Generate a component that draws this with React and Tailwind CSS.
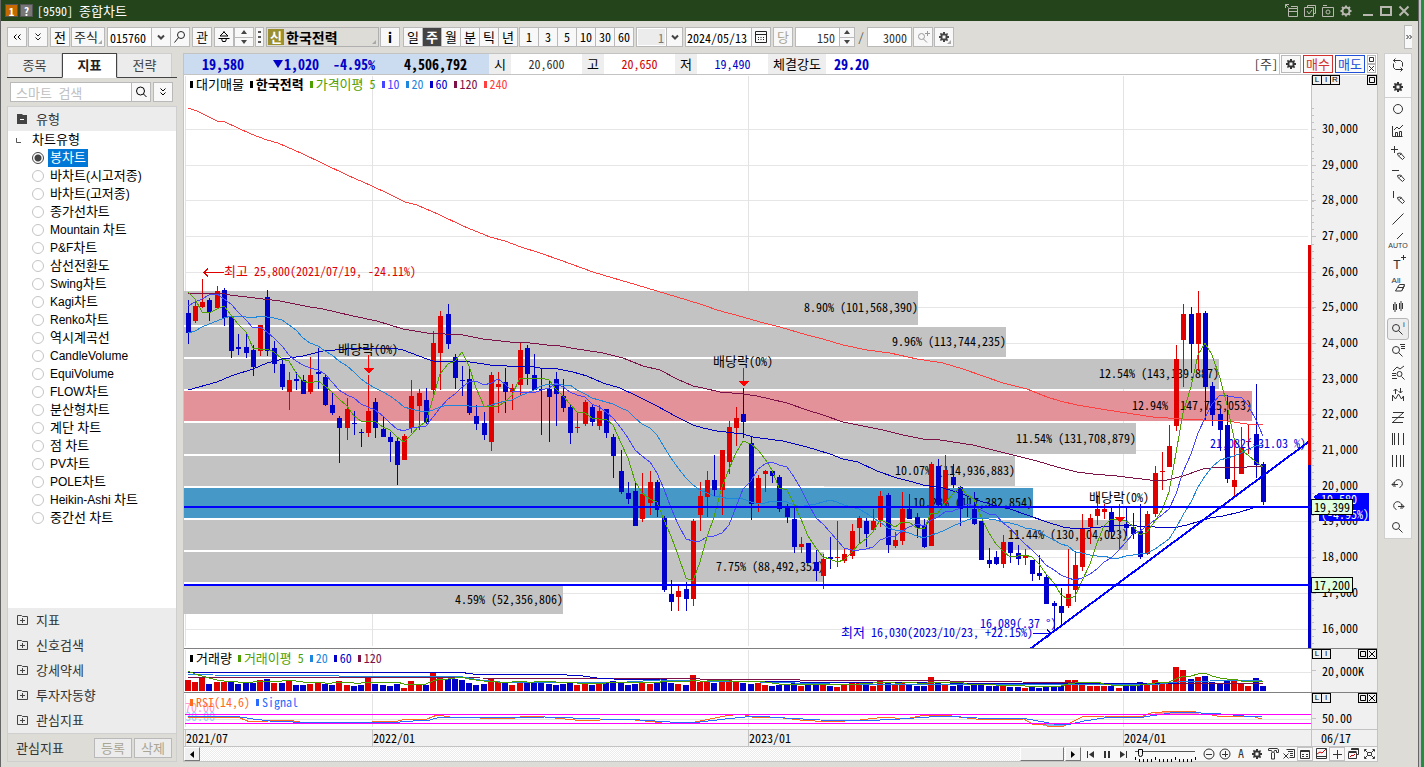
import React from "react";

/* ---------- text ---------- */

// Hangul runs are set one size larger than the half-width Latin around them.
function T({ children, size = "text-[13px]" }) {
  return String(children)
    .split(/([가-힣]+)/)
    .map((part, i) => (i % 2 ? <span key={i} className={size}>{part}</span> : part));
}

function SvgText({ children, ...props }) {
  return (
    <text fontSize="12" {...props}>
      {String(children)
        .split(/([가-힣]+)/)
        .map((part, i) => (i % 2 ? <tspan key={i} fontSize="13">{part}</tspan> : part))}
    </text>
  );
}

/* ---------- price data: [high, low, body top, body bottom, up] ---------- */

const CANDLES = [
  [300,344,313,333,0],[300,323,306,321,1],[279,308,302,307,1],[298,321,300,312,0],[286,309,291,308,1],
  [288,326,290,318,0],[317,358,317,351,0],[334,355,347,349,0],[333,358,347,353,0],[345,376,350,367,0],
  [325,356,325,351,1],[290,356,297,351,0],[341,373,348,364,0],[358,390,364,387,0],[372,410,380,392,1],
  [372,390,379,381,0],[375,394,380,394,0],[357,394,375,392,1],[348,389,372,374,0],[375,406,377,405,0],
  [393,415,405,413,0],[416,463,418,428,0],[398,440,409,428,1],[411,435,423,424,0],[429,447,432,433,0],
  [375,437,411,433,1],[398,438,402,428,0],[416,437,429,437,0],[432,462,437,442,0],[437,485,441,465,0],
  [434,460,436,460,1],[380,433,396,428,1],[389,430,393,406,1],[388,424,400,422,0],[331,394,343,390,1],
  [311,390,316,353,1],[304,349,314,344,0],[354,389,357,378,0],[366,396,380,381,0],[368,415,379,413,0],
  [405,430,416,424,0],[412,440,423,435,0],[372,451,375,442,1],[372,413,384,387,1],[368,413,382,392,0],
  [384,410,388,392,1],[343,395,350,385,1],[345,385,348,374,0],[354,390,375,390,0],[369,435,389,390,0],
  [380,442,389,397,0],[372,426,379,394,0],[379,412,396,408,0],[404,444,407,433,0],[412,433,427,428,1],
  [400,426,402,424,1],[405,426,407,422,0],[405,430,411,426,1],[409,438,409,433,0],[434,478,437,456,0],
  [450,494,471,492,0],[482,504,493,499,0],[482,526,491,526,0],[473,522,494,519,1],[471,515,482,503,1],
  [480,517,482,510,0],[516,592,518,590,0],[580,611,594,602,0],[586,611,591,597,1],[582,611,589,599,0],
  [519,606,521,599,1],[482,531,496,515,1],[471,517,480,497,1],[455,497,480,490,0],[450,515,450,490,1],
  [421,474,427,462,1],[407,446,418,428,1],[388,438,414,422,0],[437,520,443,504,0],[475,512,478,503,1],
  [470,492,471,474,1],[470,483,471,476,0],[475,512,477,509,0],[504,523,507,517,0],[505,553,519,547,0],
  [537,553,544,547,1],[543,563,543,563,0],[550,581,562,571,0],[554,589,559,576,1],[537,569,557,559,0],
  [521,567,557,558,1],[548,563,554,561,1],[524,559,531,556,1],[516,544,518,528,1],[518,547,521,534,0],
  [509,530,521,530,1],[491,527,496,520,1],[493,553,495,545,0],[532,548,540,546,1],[492,545,509,541,1],
  [494,519,509,519,0],[513,538,517,528,0],[519,548,525,547,0],[462,546,464,546,1],[459,508,466,505,0],
  [455,506,470,504,1],[464,488,477,485,0],[486,526,487,509,0],[495,517,506,507,0],[492,525,509,524,0],
  [521,560,521,560,0],[548,568,560,564,0],[551,565,557,564,0],[535,568,542,564,1],[542,563,542,553,0],
  [545,565,553,559,0],[549,565,556,558,1],[560,581,560,574,0],[555,580,573,576,0],[574,604,577,604,0],
  [601,630,603,606,0],[588,626,606,613,0],[549,608,594,606,1],[551,602,565,590,1],[514,571,529,567,1],
  [514,544,518,527,1],[495,525,509,516,1],[504,519,509,512,1],[508,539,512,532,0],[504,549,525,526,1],
  [506,536,524,528,0],[513,539,527,534,0],[504,559,531,557,0],[511,555,514,554,1],[466,517,473,514,1],
  [452,490,471,472,1],[425,467,446,467,1],[345,431,359,426,1],[304,387,314,340,1],[307,373,314,344,0],
  [291,371,313,344,1],[311,420,313,387,0],[382,426,386,415,0],[409,451,414,430,0],[395,483,425,479,0],
  [438,496,480,487,1],[427,474,447,474,1],[424,454,441,442,1],[384,478,434,465,0],[462,505,464,502,0],
];

const X0 = 188;
const STEP = 7.215;
const cx = (i) => Math.floor(X0 + 0.3 + i * STEP);
const CLOSES = CANDLES.map((c) => (c[4] ? c[2] : c[3]));

// Moving average of the last n values; seed supplies the points before the window fills.
function movingAverage(values, n, seed) {
  return values.map((_, i) => {
    if (i < n - 1) return seed[i];
    let sum = 0;
    for (let k = i - n + 1; k <= i; k++) sum += values[k];
    return sum / n;
  });
}
const toLine = (ys) => ys.map((y, i) => `${cx(i)},${Math.round(y)}`).join(" ");

const MA5 = toLine(movingAverage(CLOSES, 5, [292, 299, 312, 313]));
const MA10 = toLine(movingAverage(CLOSES, 10, [306, 302, 299, 295, 294, 299, 304, 312, 320]));
const MA20 = toLine(
  movingAverage(CLOSES, 20, [333, 331, 327, 324, 321, 318, 316, 316, 317, 318, 316, 317, 318, 320, 325, 330, 338, 343, 346])
);
const MA60 =
  "188,390 217,382 231,376 253,369 267,363 283,359 303,356 323,351 347,349 368,348 393,348 403,350 427,359 433,361 463,361 477,363 490,365 507,366 527,366 540,368 558,369 573,372 587,376 603,383 620,388 637,396 657,406 677,417 693,425 703,428 717,431 743,434 753,437 760,438 783,441 807,447 830,454 843,459 858,462 877,471 897,478 913,482 923,485 943,488 960,493 977,500 993,505 1010,509 1027,515 1047,522 1063,527 1077,529 1090,528 1112,526 1123,525 1137,526 1155,527 1173,528 1187,525 1210,518 1223,516 1240,512 1253,508 1263,507";
const MA120 =
  "188,293 220,293 230,295 263,299 280,301 310,307 323,309 353,316 377,321 403,329 427,333 463,335 483,339 510,342 530,343 547,345 560,346 577,349 603,353 623,358 643,366 660,370 677,379 693,386 703,388 720,392 743,394 757,396 770,399 787,403 807,410 823,415 843,422 863,426 883,430 903,435 923,439 940,440 973,445 997,451 1013,455 1037,461 1057,467 1077,472 1093,474 1117,476 1133,478 1150,480 1167,480 1183,476 1203,469 1220,467 1247,467 1263,466";
const MA240 =
  "188,108 197,111 217,121 225,122 251,134 267,140 278,143 303,154 324,164 347,175 372,186 389,194 405,202 417,205 440,215 463,226 490,237 505,241 521,247 540,253 560,260 593,272 613,278 637,285 657,291 687,300 703,305 717,310 743,317 760,322 780,327 807,335 823,339 843,345 867,350 890,353 917,359 943,363 963,369 983,376 1003,383 1027,389 1047,397 1060,401 1077,405 1107,410 1133,414 1153,417 1183,419 1203,420 1227,421 1247,424 1263,425";

const BANDS = [
  [291, 34, 918, "8.90% (101,568,390)", "#c3c3c3"],
  [327, 30, 1006, "9.96% (113,744,235)", "#c3c3c3"],
  [359, 30, 1219, "12.54% (143,139,887)", "#c3c3c3"],
  [391, 30, 1252, "12.94% (147,725,053)", "#e4929a"],
  [423, 31, 1136, "11.54% (131,708,879)", "#c3c3c3"],
  [456, 30, 1015, "10.07% (114,936,883)", "#c3c3c3"],
  [488, 30, 1033, "10.28% (117,382,854)", "#4698c6"],
  [520, 30, 1128, "11.44% (130,104,023)", "#c3c3c3"],
  [552, 30, 824, "7.75% (88,492,352)", "#c3c3c3"],
  [585, 29, 563, "4.59% (52,356,806)", "#c3c3c3"],
];

const GRID_X = [185, 372, 748, 1123];
const priceY = (k) => Math.round(129 + (30 - k) * 35.68);
const PRICES = Array.from({ length: 15 }, (_, i) => 30 - i);

const EVENTS = [
  [338, 354, 368, 355],
  [713, 366, 743, 368],
  [1089, 502, 1119, 504],
];

function PriceChart() {
  return (
    <svg className="block h-[572px] min-w-0 flex-1" shapeRendering="crispEdges" role="img" aria-label="한국전력 주봉 차트">
      <g transform="translate(-184 -76)">
        {PRICES.map((p) => (
          <rect key={p} x="185" y={priceY(p)} width="100%" height="1" fill="#e6e6e6" />
        ))}
        {GRID_X.map((x) => (
          <rect key={x} x={x} y="76" width="1" height="570" fill="#e3e3e3" />
        ))}
        <rect x="184" y="291" width="379" height="323" fill="#fff" />
        <rect x="184" y="291" width="640" height="291" fill="#fff" />
        {BANDS.map(([y, h, right, label, fill]) => (
          <g key={y}>
            <rect x="184" y={y} width={right - 184} height={h} fill={fill} />
            <SvgText x={right} y={y + Math.round(h / 2) + 4} textAnchor="end">{label}</SvgText>
          </g>
        ))}
        {CANDLES.map(([hi, lo, top, bottom, up], i) => (
          <g key={i} fill={up ? "#e00000" : "#0000c8"}>
            <rect x={cx(i)} y={hi} width="1" height={lo - hi} />
            <rect x={cx(i) - 2} y={top} width="5" height={Math.max(1, bottom - top)} />
          </g>
        ))}
        <g fill="none" strokeWidth="1">
          <polyline points={MA240} stroke="#ff4040" />
          <polyline points={MA120} stroke="#7d1248" />
          <polyline points={MA60} stroke="#0000c0" />
          <polyline points={MA20} stroke="#1e86dc" />
          <polyline points={MA10} stroke="#4646ff" />
          <polyline points={MA5} stroke="#4ea000" />
        </g>
        {EVENTS.map(([tx, ty, ax, ay]) => (
          <g key={tx}>
            <SvgText x={tx} y={ty}>배당락(0%)</SvgText>
            <rect x={ax} y={ay} width="1" height="13" fill="#f00" />
            <path d={`M${ax - 5} ${ay + 13}h11l-5 6z`} fill="#f00" />
          </g>
        ))}
        <g fill="#e00000">
          <SvgText x="224" y="276">최고 25,800(2021/07/19, -24.11%)</SvgText>
          <path d="M204 272.5h20M208 268.5l-4 4 4 4" stroke="#e00000" fill="none" />
        </g>
        <g fill="#0000e0">
          <SvgText x="841" y="637">최저 16,030(2023/10/23, +22.15%)</SvgText>
          <SvgText x="980" y="628">16,089(.37 °)</SvgText>
          <SvgText x="1210" y="448">21,082(-31.03 %)</SvgText>
          <path d="M1033 633.5h18M1047 629.5l4 4-4 4" stroke="#0000e0" fill="none" />
        </g>
        <rect x="184" y="506" width="100%" height="2" fill="#00f" />
        <rect x="184" y="584" width="100%" height="2" fill="#00f" />
        <path d="M1030 649L1311 440" stroke="#00f" strokeWidth="2" fill="none" />
      </g>
    </svg>
  );
}

function PriceAxis() {
  const ticks = [];
  for (let y = 108; y < 646; y += 7.136) ticks.push(Math.round(y));
  return (
    <svg className="block h-[572px] w-[69px] shrink-0" shapeRendering="crispEdges">
      <g transform="translate(-1308 -76)">
        <rect x="1308" y="76" width="3" height="572" fill="#fff" />
        <rect x="1311" y="76" width="66" height="572" fill="#f0f0f0" />
        <rect x="1311" y="76" width="1" height="572" fill="#c3c3c3" />
        <rect x="1308" y="245" width="3" height="220" fill="#e00000" />
        <rect x="1308" y="465" width="3" height="183" fill="#0000c8" />
        <rect x="1308" y="506" width="3" height="2" fill="#00f" />
        <rect x="1308" y="584" width="3" height="2" fill="#00f" />
        {ticks.map((y) => (
          <rect key={y} x="1312" y={y} width="2" height="1" fill="#c3c3c3" />
        ))}
        {PRICES.map((p) => (
          <g key={p}>
            <rect x="1312" y={priceY(p)} width="4" height="1" fill="#c3c3c3" />
            <SvgText x="1322" y={priceY(p) + 4}>{p + ",000"}</SvgText>
          </g>
        ))}
        <path d="M1313 497l6-4v8z" fill="#00f" />
        <rect x="1319" y="493" width="50" height="28" fill="#00f" />
        <g fill="#fff">
          <SvgText x="1321" y="504">19,580</SvgText>
          <SvgText x="1321" y="519">(-4.95%)</SvgText>
        </g>
        {[["19,399", 499], ["17,200", 577]].map(([label, y]) => (
          <g key={label}>
            <rect x="1311.5" y={y + 0.5} width="41" height="15" fill="#e0ffe0" stroke="#000" />
            <SvgText x="1314" y={y + 13}>{label}</SvgText>
          </g>
        ))}
      </g>
    </svg>
  );
}

/* ---------- volume and RSI ---------- */

const VOLUMES = [
  11,9,13,7,9,9,9,7,8,8,11,12,8,8,10,6,6,7,9,7,6,10,6,5,6,14,7,6,5,7,3,10,6,6,18,14,12,12,11,8,
  6,7,12,9,8,6,10,9,8,10,7,6,7,8,6,9,6,7,8,10,9,6,7,9,7,8,13,8,7,6,16,9,9,8,9,11,
  10,8,7,8,6,5,6,7,8,5,6,6,7,5,4,6,8,9,6,5,10,8,6,8,7,5,5,14,9,6,5,6,5,6,
  6,5,5,5,4,4,3,4,3,5,5,5,11,11,6,5,5,5,5,3,5,5,9,6,11,7,7,24,21,12,
  14,15,9,8,11,10,7,5,13,5,
];
const VOLUME_UP = { 0: 1, 5: 1, 12: 1, 13: 0, 14: 1, 18: 1, 21: 1, 24: 0, 25: 1, 31: 1 };
const VOLUME_MA5 = toLine(movingAverage(VOLUMES, 5, [19, 16, 14, 12]).map((v) => 690 - v));

function PlotGrid({ y, bottom, line }) {
  return (
    <>
      {GRID_X.map((x) => (
        <rect key={x} x={x} y={y} width="1" height={bottom - y} fill="#e3e3e3" />
      ))}
      <rect x="185" y={line} width="100%" height="1" fill="#e6e6e6" />
    </>
  );
}

function VolumeChart() {
  return (
    <svg className="block h-[43px] min-w-0 flex-1" shapeRendering="crispEdges" role="img" aria-label="거래량">
      <g transform="translate(-184 -649)">
        <PlotGrid y={650} bottom={691} line={672} />
        {VOLUMES.map((v, i) => (
          <rect key={i} x={cx(i) - 3} y={691 - v} width="6" height={v} fill={(VOLUME_UP[i] ?? CANDLES[i][4]) ? "#e00000" : "#0000c8"} />
        ))}
        <g fill="none">
          <polyline points="188,677 415,677 480,678 700,679 800,680 950,681 1022,682 1100,683 1177,683 1263,683" stroke="#7d1248" />
          <polyline points="188,672 458,672 473,674 550,674 583,676 597,678 613,679 660,680 700,681 800,682 950,683 1100,684 1180,683 1263,683" stroke="#0000c0" />
          <polyline points="188,674 213,675 463,677 480,680 500,682 547,682 610,683 660,680 700,681 760,682 830,684 944,684 1020,684 1160,684 1177,682 1210,681 1263,680" stroke="#1e86dc" />
          <polyline points={VOLUME_MA5} stroke="#4ea000" />
        </g>
      </g>
    </svg>
  );
}

const RSI =
  "188,717 220,717 240,718 250,722 287,720 300,722 320,722 353,723 362,724 377,721 393,722 407,719 427,719 437,715 450,717 480,718 510,719 525,716 545,717 575,720 600,720 625,719 655,722 668,724 690,723 705,720 725,716 742,714 755,718 775,717 800,720 830,722 860,720 885,717 905,719 925,715 944,715 967,718 984,720 1024,719 1032,724 1044,724 1049,727 1064,726 1074,721 1084,716 1104,716 1141,717 1151,713 1174,711 1191,711 1201,713 1217,716 1234,717 1251,716 1262,719";
const SIGNAL =
  "188,716 220,716 240,717 253,719 270,721 293,722 400,722 413,721 430,720 440,717 480,717 510,718 545,717 600,719 640,720 670,722 700,722 725,719 755,716 785,718 820,720 860,721 900,719 944,716 977,718 1027,719 1044,722 1054,724 1071,724 1084,721 1111,717 1144,717 1157,715 1177,712 1201,713 1221,714 1244,716 1262,717";

function RsiChart() {
  return (
    <svg className="block h-[36px] min-w-0 flex-1" shapeRendering="crispEdges" role="img" aria-label="RSI">
      <g transform="translate(-184 -693)">
        <PlotGrid y={694} bottom={727} line={719} />
        <path d="M1151 714l23-3h17l10 3z" fill="#ff9a9a" />
        <path d="M1032 723h40l-8 3-15 1z" fill="#7dbbe8" />
        <SvgText x="185" y="712" fill="#ff9ad0">70.00</SvgText>
        <SvgText x="185" y="721" fill="#9ad0ff">30.00</SvgText>
        <g fill="none">
          <polyline points={RSI} stroke="#ff6a1e" />
          <polyline points={SIGNAL} stroke="#2a6aff" />
        </g>
        <rect x="185" y="714" width="100%" height="1" fill="#f0f" />
        <rect x="185" y="723" width="100%" height="1" fill="#f0f" />
      </g>
    </svg>
  );
}

/* ---------- icons ---------- */

// Icons are drawn on a 16px grid at 1:1; a smaller size trims the margin evenly.
function Icon({ d, fill, label, size = 16, className = "", children }) {
  const inset = (16 - size) / 2;
  return (
    <svg width={size} height={size} viewBox={`${inset} ${inset} ${size} ${size}`} fill="none" stroke="currentColor" strokeWidth="1" className={"block shrink-0 overflow-visible " + className} aria-hidden="true">
      {d && <path d={d} />}
      {fill && <path d={fill} fill="currentColor" stroke="none" fillRule="evenodd" />}
      {label && (
        <text x={label[1]} y={label[2]} fontSize={label[3]} textAnchor="middle" fill="currentColor" stroke="none" fontFamily={label[4] || "'Liberation Sans', sans-serif"}>
          {label[0]}
        </text>
      )}
      {children}
    </svg>
  );
}

const GEAR =
  "M7 3h2v1.5l1 .4 1-1 1.2 1.2-1 1 .4 1H13v2h-1.400l-.4 1 1 1-1.200 1.200-1-1-1 .4V13H7v-1.500l-1-.4-1 1-1.200-1.200 1-1-.4-1H3v-2h1.400l.4-1-1-1L5 3.700l1 1 1-.4zM6.500 6.500v3h3v-3z";
const PENCIL = "M7.500 8.500l3-.500 4 4.500-2 2-4.500-4zM9.500 10.500l2-2";
const LENS = "M9.500 7a3.500 3.500 0 1 1-7 0 3.500 3.500 0 0 1 7 0zM8.500 9.500l4 4";

const TOOLS = [
  ["새로고침", { d: "M5.500 1.500l-2 2 2 2M3.500 3.500h7l2 2v4M10.500 14.500l2-2-2-2M12.500 12.500h-7l-2-2v-4" }],
  ["설정", { fill: GEAR }],
  ["원", { d: "M12.500 8a4.500 4.500 0 1 1-9 0 4.500 4.500 0 0 1 9 0z" }],
  ["지표 차트", { d: "M2.500 3v10.500h10M5.500 13V9.500h2V13M9.500 13V8.500h2V13M4 7l3-3 2 2 4-4" }],
  ["십자선", { d: "M4.500 1v7M1 4.500h7" + PENCIL }],
  ["수평선", { d: "M2 3.500h7" + PENCIL }],
  ["수직선", { d: "M3.500 2v7" + PENCIL }],
  ["추세선", { d: "M2.500 13.500l11-11" }],
  ["자동 추세선", { d: "M7 6l6-6", label: ["AUTO", 8, 15, 7] }],
  ["문자", { d: "M13.500 0v5M11 2.500h5", label: ["T", 7, 14, 13, "'Liberation Mono', monospace"] }],
  ["모두 지우기", { d: "M7.500 10.500h6l-2 3.500H5.500zM7.500 10.500l2-3h5l-1 3M12 13.500l2.500-5", label: ["All", 6, 6, 8] }],
  ["봉 모양", { fill: "M3 5h4v6H3zM4.500 3h1v10h-1zM9 4h4v6H9zM10.500 2h1v10h-1z" }],
  ["정보 돋보기", { d: LENS, label: ["i", 14, 6, 8] }],
  ["목록 돋보기", { d: LENS + "M10 1.500h5M11 3.500h4M11 5.500h4" }],
  ["분석 돋보기", { d: "M3 6l4-4 3 2 4-3M2 8.500h4M2 10.500h4M2 13.500h5M12 9a2.500 2.500 0 1 1-5 0 2.500 2.500 0 0 1 5 0zM11.500 11.500l3 3" }],
  ["비교", { d: "M5.500 7V2M3.500 4l2-2 2 2M10.500 1v5M8.500 4l2 2 2-2M2.500 14V8l3 4 3-5 3 5 2-3v5" }],
  ["피보나치", { d: "M3 3.500h11M2 8.500h12M2 13.500h11M13.500 3.500L2.500 13.500" }],
  ["시간대 분할", { d: "M2.500 2v12M4.500 2v12M8.500 2v12M13.500 2v12" }],
  ["등간격 분할", { d: "M2.500 2v12M6.500 2v12M10.500 2v12M13.500 2v12" }],
  ["되돌리기", { d: "M5.500 11.500a4 4 0 1 1 4 1M2 9.500h6M4.500 7l-2.500 2.500 2.500 2.500" }],
  ["다시 실행", { d: "M10.500 11.500a4 4 0 1 0-4 1M8 9.500h6M11.500 7l2.500 2.500-2.500 2.500" }],
  ["확대", { d: LENS }],
];

function ToolRail() {
  return (
    <nav aria-label="차트 도구" className="flex w-7 shrink-0 flex-col self-start border border-[#cfcfcf] bg-[#fafafa] text-[#333]">
      {TOOLS.map(([name, icon], i) => (
        <button
          key={name}
          aria-label={name}
          className={
            "flex h-[22px] items-center justify-center " +
            (i === 1 ? "border-b border-[#cfcfcf] " : "") +
            (i === 12 ? "mx-0.5 rounded-[3px] border border-[#b5b5b5] bg-[#ececec]" : "")
          }
        >
          <Icon {...icon} />
        </button>
      ))}
    </nav>
  );
}

/* ---------- top toolbar ---------- */

const BTN = "flex h-5 items-center justify-center border border-[#b9b9b9] bg-[#f8f8f8]";

function Btn({ label, className = "w-5 text-black", children }) {
  return (
    <button aria-label={label} className={BTN + " relative shrink-0 " + className}>
      {children}
    </button>
  );
}

const Corner = () => <span className="absolute right-0.5 bottom-0.5 border-b-4 border-l-4 border-b-[#a8a8a8] border-l-transparent" />;
const ChevronDown = () => <Icon d="M5 6.500l3 3 3-3" className="stroke-2 text-[#444]" size={12} />;
const DoubleDown = () => <Icon d="M5.500 4.500L8 7l2.500-2.500M5.500 8.500L8 11l2.500-2.500" size={14} />;

function Spinner({ className = "-ml-px w-4", name }) {
  return (
    <span className={"flex h-5 shrink-0 flex-col border border-[#b9b9b9] bg-[#f8f8f8] " + className}>
      <button aria-label={name + " 증가"} className="flex flex-1 items-center justify-center border-b border-[#b9b9b9]">
        <svg width="6" height="4"><path d="M0 4l3-4 3 4z" fill="#444" /></svg>
      </button>
      <button aria-label={name + " 감소"} className="flex flex-1 items-center justify-center">
        <svg width="6" height="4"><path d="M0 0l3 4 3-4z" fill="#444" /></svg>
      </button>
    </span>
  );
}

function Segments({ items, active, className = "" }) {
  return (
    <div className={"flex h-5 w-[115px] shrink-0 border border-[#b9b9b9] bg-[#f8f8f8] " + className}>
      {items.map((t) => (
        <button
          key={t}
          aria-pressed={t === active}
          className={
            "flex flex-1 items-center justify-center border-r border-[#b9b9b9] last:border-r-0 " +
            (t === active ? "bg-[#444] font-bold text-white" : "text-black")
          }
        >
          <T>{t}</T>
        </button>
      ))}
    </div>
  );
}

function Toolbar() {
  return (
    <div className="flex h-8 items-center gap-px px-1.5 text-[#222]">
      <Btn label="이전"><Icon d="M7.500 5.500L5 8l2.500 2.500M11.500 5.500L9 8l2.500 2.500" size={14} /></Btn>
      <Btn label="펼치기" className="mr-px w-5"><DoubleDown /></Btn>
      <Btn label="전체"><T>전</T></Btn>
      <Btn label="주식" className="mr-px w-[34px] pr-1"><T>주식</T><Corner /></Btn>
      <div className="mr-px flex">
        <input aria-label="종목코드" defaultValue="015760" className="h-5 w-[45px] border border-[#b9b9b9] bg-white pl-0.5 text-black" />
        <Btn label="종목 목록" className="-ml-px w-5"><ChevronDown /></Btn>
        <Btn label="종목 찾기" className="-ml-px w-5"><Icon d="M12.500 6a3.500 3.500 0 1 1-7 0 3.500 3.500 0 0 1 7 0zM6.500 8.500l-4 5" size={14} /></Btn>
      </div>
      <Btn label="관심" className="mr-px w-5"><T>관</T></Btn>
      <div className="flex">
        <Btn label="사람"><Icon d="M8 2v2M8 3L4 7h8zM2.500 9.500h11M5.500 9.500l1 3h3l1-3" size={14} /></Btn>
        <Spinner name="종목 이동" className="w-5" />
      </div>
      <Btn label="더보기" className="mr-px w-[9px]">
        <svg width="3" height="12"><path d="M0 0h3v2H0zM0 5h3v2H0zM0 10h3v2H0z" fill="#555" /></svg>
      </Btn>
      <div className="relative flex h-5 w-[113px] shrink-0 items-center gap-0.5 border border-[#b0b0b0] bg-[#dddcd6] pl-px">
        <span className="flex h-4 w-4 items-center justify-center bg-[#9c8f2e] text-[13px] font-bold text-white">신</span>
        <strong className="text-[14px] text-black">한국전력</strong>
        <Corner />
      </div>
      <Btn label="종목 정보" className="mr-0.5 w-5 text-[14px] font-bold text-black">i</Btn>
      <Segments items={["일", "주", "월", "분", "틱", "년"]} active="주" />
      <Segments items={["1", "3", "5", "10", "30", "60"]} className="mr-px" />
      <div className="mr-px flex">
        <input aria-label="간격" disabled defaultValue="1" className="h-5 w-[31px] border border-[#b9b9b9] bg-[#ececec] pr-0.5 text-right text-[#777] outline outline-1 -outline-offset-2 outline-white" />
        <Btn label="간격 목록" className="-ml-px w-[17px]"><ChevronDown /></Btn>
      </div>
      <div className="mr-px flex">
        <input aria-label="날짜" defaultValue="2024/05/13" className="h-5 w-[67px] border border-[#b9b9b9] bg-white pl-px text-black" />
        <Btn label="달력" className="-ml-px w-5">
          <Icon d="M2.500 2.500h11v11h-11zM2.500 5.500h11M5 8.500h1M7.500 8.500h1M10 8.500h1M5 10.500h1M7.500 10.500h1M10 10.500h1" size={14} />
        </Btn>
      </div>
      <Btn label="당일" className="mr-px w-5 text-[#a9a594]"><T>당</T></Btn>
      <div className="flex">
        <input aria-label="표시 개수" defaultValue="150" className="h-5 w-[45px] border border-[#b9b9b9] bg-white pr-1 text-right text-[#333]" />
        <Spinner name="표시 개수" />
      </div>
      <span className="w-2.5 text-center text-[#555]">/</span>
      <input aria-label="전체 개수" defaultValue="3000" className="h-5 w-[45px] border border-[#b9b9b9] bg-white pr-1 text-right text-[#333]" />
      <Btn label="확대" className="w-5 text-[#999]"><Icon d="M9.500 7.500a3 3 0 1 1-6 0 3 3 0 0 1 6 0zM8.500 10l3.500 3.500M12.500 2v5M10 4.500h5" size={14} /></Btn>
      <Btn label="차트 설정" className="w-5 text-[#444]"><Icon fill={GEAR} /><Corner /></Btn>
      <button aria-label="도구 더보기" className="ml-auto flex h-6 w-2 items-center justify-center border-y border-l border-[#b9b9b9] bg-[#f8f8f8]">
        <Icon d="M5.500 6L7.500 8l-2 2M8.500 6l2 2-2 2" size={8} />
      </button>
    </div>
  );
}

function TitleBar() {
  return (
    <header className="flex h-[21px] items-center bg-[#24441c] pr-2 pl-1 text-white">
      <span className="flex h-[13px] w-[13px] items-center justify-center border border-[#555] bg-[#c46a00] text-[11px] font-bold">1</span>
      <button aria-label="도움말" className="ml-0.5 flex h-[13px] w-[13px] items-center justify-center border border-[#555] bg-[#777] text-[11px] font-bold">?</button>
      <h1 className="ml-1"><T>[9590] 종합차트</T></h1>
      <div className="ml-auto flex items-center gap-0.5 text-[#b8b8b0]">
        <button aria-label="창 분리"><Icon d="M4.500 5.500h9v8h-9zM4.500 8.500h9M1.500 5V1.500H5M1.500 1.500l3 3M7 3.500h6.500v2" /></button>
        <button aria-label="창 복사"><Icon d="M2.500 4.500h9v9h-9zM5.500 4V2.500h8v8H12M5 8l2 3 3-4" /></button>
        <button aria-label="화면 캡처"><Icon d="M2.500 4.500h11v9h-11zM3 2.500h4M10 9a2 2 0 1 1-4 0 2 2 0 0 1 4 0z" /></button>
        <button aria-label="화면 설정"><Icon d="M11.500 8a3.500 3.500 0 1 1-7 0 3.500 3.500 0 0 1 7 0zM8 2.500V4M8 12v1.500M2.500 8H4M12 8h1.500M4 4l1.500 1.500M10.500 10.500L12 12M12 4l-1.500 1.500M5.500 10.500L4 12" className="stroke-2" /></button>
        <button aria-label="최소화" className="ml-1.5"><svg width="12" height="12" className="block"><path d="M1 10h10" stroke="currentColor" strokeWidth="2" /></svg></button>
        <button aria-label="최대화" className="ml-[3px]"><svg width="14" height="12" className="block"><path d="M2 2h10v8H2z" fill="none" stroke="currentColor" strokeWidth="2" /></svg></button>
        <button aria-label="닫기" className="ml-[3px]"><svg width="12" height="12" className="block"><path d="M1.500 1.500l9 9M10.500 1.500l-9 9" stroke="currentColor" strokeWidth="2" /></svg></button>
      </div>
    </header>
  );
}

/* ---------- sidebar ---------- */

const CHART_TYPES = [
  "봉차트", "바차트(시고저종)", "바차트(고저종)", "종가선차트", "Mountain 차트", "P&F차트", "삼선전환도",
  "Swing차트", "Kagi차트", "Renko차트", "역시계곡선", "CandleVolume", "EquiVolume", "FLOW차트",
  "분산형차트", "계단 차트", "점 차트", "PV차트", "POLE차트", "Heikin-Ashi 차트", "중간선 차트",
];

function Sidebar() {
  return (
    <aside className="flex w-[170px] shrink-0 flex-col">
      <div role="tablist" className="flex h-[25px] border-b border-[#444] text-[#444]">
        {["종목", "지표", "전략"].map((t) => (
          <button
            key={t}
            role="tab"
            aria-selected={t === "지표"}
            className={
              "w-[55px] border pb-0.5 " +
              (t === "지표" ? "-mb-px border-[#444] border-b-white bg-white font-bold text-[#222]" : "border-b-0 border-[#cfcfcf] bg-[#ececec]")
            }
          >
            <T>{t}</T>
          </button>
        ))}
      </div>
      <div className="flex h-7 items-center gap-0.5 px-[3px]">
        <div className="flex">
          <input aria-label="스마트 검색" placeholder="스마트 검색" className="h-5 w-[122px] border border-[#b9b9b9] bg-white pl-[5px] text-[13px] placeholder:text-[#c0c0c0]" />
          <Btn label="검색" className="-ml-px w-5"><Icon d="M11.500 7a4 4 0 1 1-8 0 4 4 0 0 1 8 0zM10.500 10l3 3" size={14} /></Btn>
        </div>
        <Btn label="검색 옵션"><DoubleDown /></Btn>
      </div>
      <section className="flex flex-1 flex-col border border-[#cfcfcf] bg-white">
        <h2 className="flex h-6 items-center bg-[#ececec] pb-px pl-2 text-[#333]">
          <svg width="12" height="11" className="mr-2 block"><path d="M1 1h5l1 1h4v9H1z" fill="#444" /><path d="M4 6.500h4" stroke="#fff" /></svg>
          <T>유형</T>
        </h2>
        <fieldset aria-label="차트유형" className="flex-1 text-black font-['Liberation_Sans','Noto_Sans_CJK_KR',sans-serif]">
          <div className="flex h-[18px] items-center pl-2">
            <svg width="6" height="5" className="mr-2.5 block"><path d="M.500 0v4.500H5" fill="none" stroke="#555" /></svg>
            <span className="text-[13px]">차트유형</span>
          </div>
          {CHART_TYPES.map((t, i) => (
            <label key={t} className="flex h-[18px] items-center gap-1 pl-6">
              <input
                type="radio"
                name="chart-type"
                defaultChecked={i === 0}
                className="h-3 w-3 appearance-none rounded-full border border-[#c4c4c4] bg-white checked:border-[#444] checked:bg-[radial-gradient(#444_0_3px,#fff_4px)]"
              />
              <span className={"px-0.5 whitespace-nowrap " + (i === 0 ? "bg-[#0078d7] text-white" : "")}>
                <T>{t}</T>
              </span>
            </label>
          ))}
        </fieldset>
        <div className="bg-[#ececec]">
          {["지표", "신호검색", "강세약세", "투자자동향", "관심지표"].map((t) => (
            <button key={t} className="flex h-[25px] w-full items-center pb-0.5 pl-[9px] text-[#333]">
              <svg width="11" height="10" className="mr-2 block"><path d="M.500 .500h4l1 1h5v8H.500zM3 5.500h5M5.500 3v5" fill="none" stroke="#444" /></svg>
              <T>{t}</T>
            </button>
          ))}
        </div>
        <div className="flex h-7 items-center gap-0.5 border-t border-[#cfcfcf] bg-[#dddcd6] pr-1 pl-2 text-[#333]">
          <span className="mr-auto"><T>관심지표</T></span>
          <button className="h-5 w-[38px] border border-[#b9b9b9] bg-[#ececec] leading-4 text-[#a9a594]"><T>등록</T></button>
          <button className="h-5 w-[38px] border border-[#b9b9b9] bg-[#ececec] leading-4 text-[#a9a594]"><T>삭제</T></button>
        </div>
      </section>
    </aside>
  );
}

/* ---------- quote bar ---------- */

function QuoteBar() {
  const tag = "flex h-full items-center justify-center bg-[#eee] text-black";
  const value = "flex h-full items-center justify-center w-[71px]";
  return (
    <div className="flex h-[22px] items-center border border-[#c3c3c3] bg-white">
      <div className="flex h-full items-center bg-[#ccdcf0] pr-[22px] text-right text-[14px] font-bold text-[#0000c8]">
        <span className="w-[60px]">19,580</span>
        <span className="flex w-[75px] items-center justify-end">
          <svg width="10" height="8" className="mr-px"><path d="M0 0h10L5 8z" fill="currentColor" /></svg>1,020
        </span>
        <span className="w-[56px]">-4.95%</span>
        <span className="w-[92px] text-black">4,506,792</span>
      </div>
      <span className={tag + " w-[22px]"}><T>시</T></span>
      <span className={value + " text-[#333]"}>20,600</span>
      <span className={tag + " w-[22px]"}><T>고</T></span>
      <span className={value + " text-[#d00000]"}>20,650</span>
      <span className={tag + " w-[22px]"}><T>저</T></span>
      <span className={value + " text-[#0000c8]"}>19,490</span>
      <span className={tag + " w-[58px]"}><T>체결강도</T></span>
      <span className="pl-2 text-[14px] font-bold text-[#0000c8]">29.20</span>
      <div className="ml-auto flex h-full items-center text-[#333]">
        <span><T>[주]</T></span>
        <span className="ml-px flex h-full items-center gap-0.5 border-l border-[#c3c3c3] px-px">
          <button aria-label="호가 설정" className="flex h-[18px] w-5 items-center justify-center border border-[#b9b9b9] bg-[#f8f8f8]"><Icon fill={GEAR} /></button>
          <button className="h-[18px] w-[30px] border border-[#d03030] bg-[#fafafa] leading-4 text-[#d03030]"><T>매수</T></button>
          <button className="h-[18px] w-[30px] border border-[#2050d8] bg-[#fafafa] leading-4 text-[#2050d8]"><T>매도</T></button>
          <span className="flex flex-col">
            <button aria-label="차트 최대화" className="flex h-[9px] w-[9px] items-center justify-center border border-[#b9b9b9] bg-white"><svg width="5" height="5"><path d="M.500 .500h4v4h-4z" fill="none" stroke="#333" /></svg></button>
            <button aria-label="차트 닫기" className="flex h-[9px] w-[9px] items-center justify-center border border-[#b9b9b9] bg-white"><svg width="5" height="5"><path d="M0 0l5 5M5 0L0 5" stroke="#333" /></svg></button>
          </span>
        </span>
      </div>
    </div>
  );
}

/* ---------- chart frame ---------- */

function Legend({ items }) {
  return (
    <div className="pointer-events-none absolute top-0 left-1.5 flex gap-1.5 leading-[18px] whitespace-pre">
      {items.map(([text, color, bold]) => (
        <span key={text} className={"flex items-center " + (bold ? "font-bold" : "")} style={{ color }}>
          <i className="mr-[3px] h-[7px] w-[3px] bg-current" />
          <span><T>{text}</T></span>
        </span>
      ))}
    </div>
  );
}

function PaneButtons({ letters, close }) {
  const box = "flex h-2.5 w-2.5 shrink-0 items-center justify-center border border-black bg-[#f0f0f0] text-black";
  return (
    <div className="absolute top-0 right-0 flex w-[66px] pl-px text-[8px] leading-none font-['Liberation_Sans',sans-serif]">
      {letters.map((l) => (
        <button key={l} className={box + " -mr-px"}>{l}</button>
      ))}
      <span className="flex-1" />
      <button aria-label="확대" className={box}><svg width="6" height="6"><path d="M.500 .500h5v5h-5z" fill="none" stroke="#000" /></svg></button>
      {close && <button aria-label="닫기" className={box + " -ml-px"}><svg width="6" height="6"><path d="M0 0l6 6M6 0L0 6" stroke="#000" /></svg></button>}
    </div>
  );
}

function SmallAxis({ height, label }) {
  return (
    <div className={"flex w-[66px] shrink-0 items-center border-l border-[#c3c3c3] bg-[#f0f0f0] " + height}>
      <i className="mr-1.5 h-px w-1 bg-[#c3c3c3]" />
      <span>{label}</span>
    </div>
  );
}

function ScrollRow() {
  const raised = "flex h-[14px] shrink-0 items-center justify-center border border-white border-r-[#777] border-b-[#777] bg-[#f0f0f0]";
  const icon = "flex h-[14px] w-4 shrink-0 items-center justify-center";
  return (
    <div className="flex h-[15px] items-center border-t border-[#c3c3c3] bg-[#f8f8f8] text-[#333]">
      <div className="flex h-full min-w-0 flex-1 bg-[repeating-conic-gradient(#fff_0_25%,#ebebeb_0_50%)] bg-[length:2px_2px]">
        <button aria-label="왼쪽으로" className={raised + " w-4"}><svg width="4" height="7"><path d="M4 0v7L0 3.500z" /></svg></button>
        <div className="flex-1" />
        <div className={raised + " w-11"} />
        <button aria-label="오른쪽으로" className={raised + " ml-px w-4"}><svg width="4" height="7"><path d="M0 0v7l4-3.500z" /></svg></button>
      </div>
      <div className="flex w-[54px] shrink-0 items-center pl-0.5">
        <button aria-label="처음" className={icon}><Icon size={12} d="M4.500 5v7" fill="M11 5v7L6 8.500z" /></button>
        <button aria-label="일시정지" className={icon}><Icon size={12} fill="M5 5h2v7H5zM9 5h2v7H9z" /></button>
        <button aria-label="마지막" className={icon}><Icon size={12} d="M11.500 5v7" fill="M5 5v7l5-3.500z" /></button>
      </div>
      <div className="relative h-full w-[62px] shrink-0">
        <svg className="absolute inset-0" width="62" height="15" shapeRendering="crispEdges">
          <path d="M0 4.500h60" stroke="#555" />
          {Array.from({ length: 16 }, (_, i) => (
            <rect key={i} x={i * 4} y={i % 5 === 0 ? 10 : 12} width="1" height="3" fill="#000" />
          ))}
        </svg>
        <input
          type="range"
          aria-label="재생 속도"
          defaultValue="6"
          className="absolute top-0.5 left-0 h-2 w-[60px] appearance-none bg-transparent [&::-webkit-slider-thumb]:h-2 [&::-webkit-slider-thumb]:w-[5px] [&::-webkit-slider-thumb]:appearance-none [&::-webkit-slider-thumb]:rounded-b-[3px] [&::-webkit-slider-thumb]:border [&::-webkit-slider-thumb]:border-black [&::-webkit-slider-thumb]:bg-[#f0f0f0]"
        />
      </div>
      <div className="flex shrink-0 pl-1">
        <button aria-label="축소" className={icon}><Icon size={14} d="M13 8A5 5 0 1 1 3 8a5 5 0 0 1 10 0zM5 8.500h6" /></button>
        <button aria-label="확대" className={icon}><Icon size={14} d="M13 8A5 5 0 1 1 3 8a5 5 0 0 1 10 0zM5 8.500h6M8.500 5v6" /></button>
        <button aria-label="글꼴" className={icon}><Icon size={14} label={["A", 8, 12, 12, "'Noto Sans Mono CJK KR', monospace"]} /></button>
        <button aria-label="설정" className={icon}><Icon size={14} fill={GEAR} /></button>
        <button aria-label="도구" className={icon}><Icon size={14} d="M4 2.500h8l1.500 1v3h-2v-2h-2l-1 2h-1l-1-2h-3v-2M6.500 6.500v6.500h3V6.500" /></button>
        <button aria-label="내보내기" className={icon}><Icon size={14} d="M5.500 3.500h8v8h-5M7 5.500h5M9 7.500h3M9 9.500h3M2.500 7.500l5 5M7.500 7.500l-5 5" /></button>
        <button aria-label="데이터 창" className={icon + " border border-[#c3c3c3]"}><Icon size={14} d="M3.500 4.500h9v8h-9zM3 5.500h10M5 8.500h2M5 10.500h2M9 8.500h2M9 10.500h2" /></button>
        <button aria-label="차트 창" className={icon}><Icon size={14} d="M3.500 2.500h10v10h-10zM3.500 10.500h10"><path d="M4 8l3-2 2 1 4-4" stroke="#d00000" /></Icon></button>
        <button aria-label="십자선" className={icon + " border border-[#c3c3c3]"}><Icon size={14} d="M8.500 4v9M4 8.500h9" /></button>
        <button aria-label="복사" className={icon}><Icon size={14} d="M6.500 4V2.500h7v6H12M3.500 6.500h8v6h-8zM3.500 5.500h8M6.500 3.500h7"><path d="M5 11l2-2 1 1 2-2" stroke="#d00000" /></Icon></button>
        <button aria-label="전체화면" className={icon}><Icon size={14} d="M3.500 5.500v-2h2M11.500 3.500h2v2M13.500 10.500v2h-2M5.500 12.500h-2v-2M6.500 6.500h4v3h-4zM4 4l2 2M13 4l-2 2M13 12l-2-2M4 12l2-2" /></button>
      </div>
    </div>
  );
}

function ChartFrame() {
  return (
    <main className="flex min-w-0 flex-1 flex-col">
      <QuoteBar />
      <div className="flex flex-1 flex-col border-x border-b border-[#c3c3c3] bg-white">
        <section className="relative flex border-b border-[#808080] pt-px">
          <PriceChart />
          <PriceAxis />
          <Legend
            items={[
              ["대기매물", "#000"],
              ["한국전력", "#000", true],
              ["가격이평 5", "#4ea000"],
              ["10", "#4646ff"],
              ["20", "#1e86dc"],
              ["60", "#0000c8"],
              ["120", "#7d1248"],
              ["240", "#ff4040"],
            ]}
          />
          <PaneButtons letters={["L", "I", "R"]} />
        </section>
        <section className="relative flex border-b border-[#808080]">
          <VolumeChart />
          <SmallAxis height="h-[43px]" label="20,000K" />
          <Legend
            items={[
              ["거래량", "#000"],
              ["거래이평 5", "#4ea000"],
              ["20", "#1e86dc"],
              ["60", "#0000c8"],
              ["120", "#7d1248"],
            ]}
          />
          <PaneButtons letters={["L", "I"]} close />
        </section>
        <section className="relative flex">
          <RsiChart />
          <SmallAxis height="h-[36px] pt-3.5" label="50.00" />
          <Legend items={[["RSI(14,6)", "#ff6a1e"], ["Signal", "#2a6aff"]]} />
          <PaneButtons letters={["L", "I"]} close />
        </section>
        <div className="flex h-[17px] border-t border-[#c3c3c3] bg-[#f0f0f0] leading-4">
          <div className="flex min-w-0 flex-1">
            <span className="ml-px w-[187px] border-l border-[#c3c3c3]">2021/07</span>
            <span className="w-[376px] border-l border-[#c3c3c3]">2022/01</span>
            <span className="w-[375px] border-l border-[#c3c3c3]">2023/01</span>
            <span className="border-l border-[#c3c3c3]">2024/01</span>
          </div>
          <span className="w-[66px] shrink-0 border-l border-[#c3c3c3] pl-[9px]">06/17</span>
        </div>
        <ScrollRow />
      </div>
    </main>
  );
}

export default function App() {
  return (
    <div className="flex min-h-screen bg-[#dddcd6] text-[12px] leading-[18px] text-black font-['Noto_Sans_Mono_CJK_KR','Noto_Sans_CJK_KR',monospace]">
      <div className="flex min-w-0 flex-1 flex-col border-l border-[#666]">
        <TitleBar />
        <Toolbar />
        <div className="flex flex-1 gap-1.5 px-1.5 pb-[5px]">
          <Sidebar />
          <ChartFrame />
          <ToolRail />
        </div>
      </div>
      <div className="flex shrink-0" aria-hidden="true">
        <i className="w-px bg-[#666]" />
        <i className="w-0.5 bg-[#c3c3c8]" />
        <i className="w-px bg-[#666]" />
        <i className="w-0.5 bg-[#1f9040]" />
      </div>
    </div>
  );
}
